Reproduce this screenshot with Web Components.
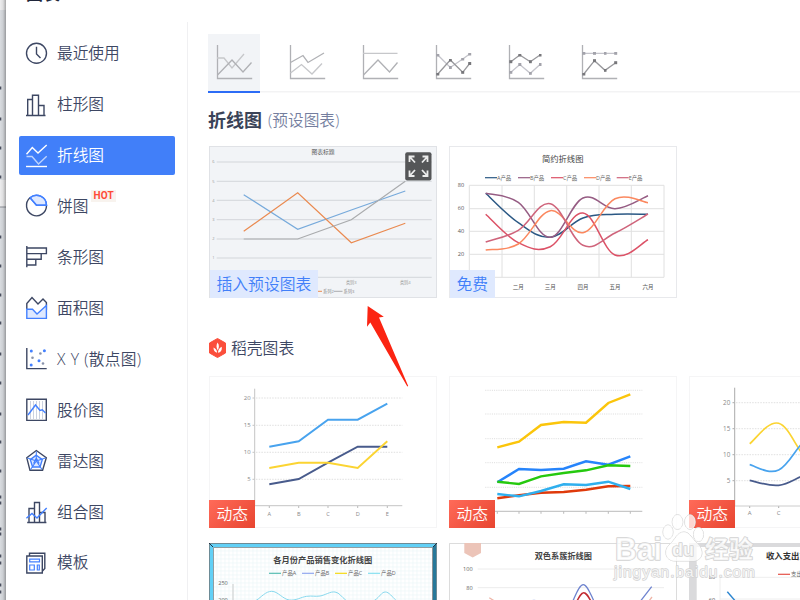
<!DOCTYPE html>
<html lang="zh-CN">
<head>
<meta charset="utf-8">
<title>图表</title>
<style>
    html, body {
        margin: 0;
        width: 800px;
        height: 600px;
        overflow: hidden;
        background: #fff;
        font-family: "Open Sans", "Noto Sans CJK SC", sans-serif;
    }
</style>
</head>
<body>

<chart-dialog>
    <side-nav slot="nav">
        <nav-item icon="clock">最近使用</nav-item>
        <nav-item icon="column">柱形图</nav-item>
        <nav-item icon="line" active>折线图</nav-item>
        <nav-item icon="pie" badge="HOT">饼图</nav-item>
        <nav-item icon="bar">条形图</nav-item>
        <nav-item icon="area">面积图</nav-item>
        <nav-item icon="scatter" class="wide">X Y (散点图)</nav-item>
        <nav-item icon="stock">股价图</nav-item>
        <nav-item icon="radar">雷达图</nav-item>
        <nav-item icon="combo">组合图</nav-item>
        <nav-item icon="template">模板</nav-item>
    </side-nav>

    <tab-strip>
        <tab-icon kind="0" active></tab-icon>
        <tab-icon kind="1"></tab-icon>
        <tab-icon kind="2"></tab-icon>
        <tab-icon kind="3"></tab-icon>
        <tab-icon kind="4"></tab-icon>
        <tab-icon kind="5"></tab-icon>
    </tab-strip>

    <chart-section>
        <preset-heading slot="heading" note="(预设图表)">折线图</preset-heading>
        <chart-card chart="preset" hovered tag="插入预设图表"></chart-card>
        <chart-card chart="simple" tag="免费"></chart-card>
    </chart-section>

    <chart-section>
        <docer-heading slot="heading">稻壳图表</docer-heading>
        <chart-card chart="abc" kind="live" tag="动态"></chart-card>
        <chart-card chart="multi" kind="live" tag="动态"></chart-card>
        <chart-card chart="curve" kind="live" tag="动态"></chart-card>
        <chart-card chart="sales" kind="bare"></chart-card>
        <chart-card chart="cluster"></chart-card>
        <chart-card chart="income" kind="bare"></chart-card>
    </chart-section>

    <red-arrow slot="overlay"></red-arrow>
    <water-mark slot="overlay"></water-mark>
</chart-dialog>

<script>
// Small helper: every component renders its markup once
function render(host, html) {
    const root = host.attachShadow({ mode: 'open' });
    const template = document.createElement("template");
    template.innerHTML = html;
    root.appendChild(template.content.cloneNode(true));
    return root;
}



// Icons of the side navigation, 22 x 24
const navIcons = {
    clock: `<circle cx="10.5" cy="11.3" r="10"/><path d="M10.5 4.8V12L14.5 16"/>`,
    column: `<path d="M0 22.5H19.5M1.7 22.5V6.5H6.5M6.5 22.5V2.2H12.5V22.5M12.5 12.5H18V22.5"/>`,
    line: `<path d="M.5 10.2L6.3 3.5L12 9L20.7 1"/><path d="M.5 12.5H6L12.5 20L20.7 12.3" opacity=".65"/><path d="M0 22.5H21"/>`,
    pie: `<path d="M10.5 11.3L4 3.7A10 10 0 0 1 20.5 11.3Z" fill="#dfe9ff" stroke="#4380ff"/><path d="M4 3.7A10 10.3 0 1 0 20.5 11.5"/><path d="M4 3.7A10 10 0 0 1 20.5 11.3H10.5L4 3.7" stroke="#4380ff"/>`,
    bar: `<path d="M.8 1V22.3M.8 3H20.4V8.6H.8M15.2 8.6V14.2H.8M9.8 14.2V20H.8"/>`,
    area: `<path d="M.8 13V7.5L6 1.5L12 8L17 3L20.4 6.5V14"/><path d="M.8 13.2H6.5L11 18L20.4 9.5V22.4H.8Z" fill="#dfe9ff" stroke="#4380ff"/>`,
    scatter: `<path d="M.8 1V21.6H20.7"/><g stroke="none" fill="#4380ff"><circle cx="5.3" cy="3.9" r="1.5"/><circle cx="18.4" cy="3.8" r="1.5"/><circle cx="13" cy="13.8" r="1.5"/><circle cx="5.2" cy="18" r="1.5"/></g><g stroke="none" fill="#8a93ab"><circle cx="14.4" cy="6.5" r="1.3"/><circle cx="6.5" cy="10.8" r="1.3"/><circle cx="17" cy="16.5" r="1.3"/></g>`,
    stock: `<path d="M4.5 3V21M7.5 3V21M10.5 3V21M13.5 3V21M16.5 3V21" stroke="#ccd2e0" stroke-width="1"/><path d="M.8 1.2H20.3V22.4H.8Z"/><path d="M2 17L9.5 7L14 12.5L16.3 11.8L19.5 15" stroke="#4380ff"/>`,
    radar: `<path d="M10.3 1.5L20.3 8.8L16.6 21.3H4L.8 8.8Z"/><path d="M10.3 6.2L16.3 10.6L14 18H6.6L4.3 10.6Z" fill="#dfe9ff" stroke="#4380ff"/><path d="M10.3 2.5V12M10.3 12L19.5 9M10.3 12L16 20.5M10.3 12L4.6 20.5M10.3 12L1.5 9M7.5 14.5L10.3 9L13.2 14.5" stroke="#4380ff" stroke-width="1.1"/>`,
    combo: `<path d="M1.2 22.5H20.4M3 22.5V8.5H8.5M8.5 22.5V2.5H13.5V22.5M13.5 12.5H19V22.5"/><path d="M.4 18.3L6 13.4L11 18L20.7 8" stroke="#4380ff"/>`,
    template: `<path d="M3.5 5V2.2H18.8V17.5L16.5 20"/><path d="M.8 5H16.3V22H.8Z"/><path d="M3.7 8.2H13.5V10.8H3.7ZM3.7 14H8.3V19H3.7ZM11.3 14H13.3V19H11.3Z" stroke="#4380ff" stroke-width="1.2"/>`
};

class NavItem extends HTMLElement {
    connectedCallback() {
        const badge = this.getAttribute("badge");
        render(this, `
        <style>
            :host {
                display: flex;
                align-items: center;
                box-sizing: border-box;
                height: 39.9px;
                padding-left: 7px;
                border-radius: 2px;
                color: #3d4763;
                font-size: 15.7px;
                font-weight: 350;
                white-space: nowrap;
            }
            :host([active]) { background: #417ff9; color: #fff; }
            :host(.wide) { word-spacing: .6px; letter-spacing: .3px; }
            svg { width: 22px; height: 24px; margin-right: 9px; overflow: visible; }
            .label { padding-bottom: 1.5px; }
            .badge {
                align-self: flex-start;
                margin: 4px 0 0 3px;
                padding: 0 2px;
                font: bold 10px/12px Roboto, sans-serif;
                letter-spacing: .3px;
                background: #f8f3ee;
                color: #ff4a37;
            }
        </style>
        <svg viewBox="0 0 22 24" fill="none" stroke="currentColor" stroke-width="1.4">${navIcons[this.getAttribute("icon")]}</svg>
        <span class="label"><slot></slot></span>
        ${badge ? `<span class="badge">${badge}</span>` : ""}`);
    }
}
customElements.define("nav-item", NavItem);

class SideNav extends HTMLElement {
    connectedCallback() {
        render(this, `
        <style>
            :host {
                display: flex;
                flex-direction: column;
                gap: 11px;
                box-sizing: border-box;
                width: 182px;
                height: 578px;
                margin-top: 22px;
                padding: 11.8px 12px 0 13px;
                border-right: 1px solid #f0f0f2;
            }
        </style>
        <slot></slot>`);
    }
}
customElements.define("side-nav", SideNav);



// Tabs
const tabIcons = [
    `<path d="M0 13H7L15 23L27 9" stroke="#c6c7ca"/><path d="M.5 30L15 15L26 27L34.5 17.5"/>`,
    `<path d="M.5 28L11.5 19.5L22 29L32 18.5" stroke="#c6c7ca"/><path d="M.5 17.5L13 10.5L18 17.5L34 8"/>`,
    `<path d="M0 8.3H34.5" stroke="#c6c7ca"/><path d="M.5 30L15 15L26.5 27L34.5 17.5"/>`,
    `<path class="dots" d="M1.8 10L14.3 22.5L26.7 14L33.7 9" stroke="#c4c4cb"/><path class="dots dark" d="M1.8 29L14.3 15L26.7 27.3L33.7 18.5" stroke="#98989c"/>`,
    `<path class="dots" d="M1.8 27.3L10.8 19.5L21.3 28.3L31 19.5" stroke="#c4c4cb"/><path class="dots dark" d="M1.8 16.7L10.8 10L21.3 16.7L31 10" stroke="#98989c"/>`,
    `<path class="dots" d="M1.8 8.3H12.5H23H33.7" stroke="#c4c4cb"/><path class="dots dark" d="M1.8 29L12.5 15.7L23 25.3L33.7 17.7" stroke="#98989c"/>`
];

class TabIcon extends HTMLElement {
    connectedCallback() {
        render(this, `
        <style>
            :host { display: block; box-sizing: border-box; width: 52px; height: 59px; padding: 11px 0 0 9px; border-bottom: 2px solid transparent; }
            :host([active]) { background: #f2f4f7; background-clip: padding-box; border-color: #2c6cf6; }
            svg { display: block; overflow: visible; }
            .dots { marker: url(#dot); }
            .dots.dark { marker: url(#dark-dot); }
        </style>
        <svg width="36" height="35" fill="none" stroke="#b0b1b5" stroke-width="1.3">
            <marker id="dot" markerUnits="userSpaceOnUse" markerWidth="4" markerHeight="4" refX="1.5" refY="1.5">
                <rect width="3" height="3" fill="#a3a3ab" stroke="none"/>
            </marker>
            <marker id="dark-dot" markerUnits="userSpaceOnUse" markerWidth="4" markerHeight="4" refX="1.5" refY="1.5">
                <rect width="3" height="3" fill="#77777b" stroke="none"/>
            </marker>
            <path d="M.5 0V33.5H35.2"/>${tabIcons[this.getAttribute("kind")]}
        </svg>`);
    }
}
customElements.define("tab-icon", TabIcon);

class TabStrip extends HTMLElement {
    connectedCallback() {
        render(this, `
        <style>
            :host {
                display: flex;
                gap: 21px;
                height: 59px;
                background: linear-gradient(#f3f3f4, #f3f3f4) 0 57px / 100% 1.5px no-repeat;
            }
        </style>
        <slot></slot>`);
    }
}
customElements.define("tab-strip", TabStrip);



// Section headings
class PresetHeading extends HTMLElement {
    connectedCallback() {
        render(this, `
        <style>
            :host { display: flex; align-items: center; gap: 6px; box-sizing: border-box; height: 54px; margin: 0 0 -1px -1px; padding-bottom: 2px; white-space: nowrap; }
            b { font-size: 18px; color: #3a4358; }
            span { font-size: 15.7px; font-weight: 350; color: #747e9e; }
        </style>
        <b><slot></slot></b><span>${this.getAttribute("note")}</span>`);
    }
}
customElements.define("preset-heading", PresetHeading);

class DocerHeading extends HTMLElement {
    connectedCallback() {
        render(this, `
        <style>
            :host { display: flex; align-items: center; gap: 5px; height: 56px; margin-top: 22px; color: #3d4763; font-size: 15.8px; font-weight: 350; }
            span { padding-bottom: 1px; }
        </style>
        <svg width="17" height="20" viewBox="0 0 17 20">
            <path d="M8.5 .5L16.5 5V15L8.5 19.5L.5 15V5Z" fill="#fb4f3c" stroke="#fb4f3c" stroke-linejoin="round"/>
            <path d="M8.6 4.5C10.6 7 10 10 8.8 12.2C7.3 10 7 7 8.6 4.5ZM4.5 9.5C6.8 10.5 8 12.3 8.1 14.8C5.6 14.2 4.5 12.3 4.5 9.5ZM12.8 8.7C13.2 12.3 11.7 14.5 9 14.8C9 12.2 10.3 9.8 12.8 8.7Z" fill="#fff"/>
        </svg>
        <span><slot></slot></span>`);
    }
}
customElements.define("docer-heading", DocerHeading);



// Charts
function line(xs, ys, color, width = 1.5) {
    const points = xs.map((x, i) => x + "," + ys[i]).join(" ");
    return `<polyline points="${points}" fill="none" stroke="${color}" stroke-width="${width}"/>`;
}

function curve(xs, ys, color, width = 1.5) {
    let d = `M${xs[0]} ${ys[0]}`;
    for (let i = 0; i < xs.length - 1; i++) {
        const a = Math.max(i - 1, 0);
        const b = Math.min(i + 2, xs.length - 1);
        const k = 5.4;
        d += `C${xs[i] + (xs[i + 1] - xs[a]) / k} ${ys[i] + (ys[i + 1] - ys[a]) / k} `
           + `${xs[i + 1] - (xs[b] - xs[i]) / k} ${ys[i + 1] - (ys[b] - ys[i]) / k} ${xs[i + 1]} ${ys[i + 1]}`;
    }
    return `<path d="${d}" fill="none" stroke="${color}" stroke-width="${width}"/>`;
}

function rows(ys, x1, x2, color, dash = "none", width = 1) {
    return ys.map(y => `<path d="M${x1} ${y}H${x2}" stroke="${color}" stroke-dasharray="${dash}" stroke-width="${width}"/>`).join("");
}

function text(x, y, str, size, color = "#777", anchor = "middle", weight = 400) {
    return `<text x="${x}" y="${y + size * .36}" font-size="${size}" fill="${color}" text-anchor="${anchor}" font-weight="${weight}">${str}</text>`;
}

function legend(items, y, length, gap = 0) {
    return items.map(([x, color, name]) =>
        `<path d="M${x} ${y}h${length}" stroke="${color}" stroke-width="1.2"/>` + text(x + length + gap, y, name, 5.4, "#666", "start")).join("");
}

const charts = {
    preset() {
        const xs = [34.7, 88.7, 142.3, 196.3];
        return rows([16, 35.3, 54.3, 73.7, 93, 112, 131.3], 7.7, 222.7, "#d3d6da")
            + text(114, 6, "图表标题", 5.8, "#555")
            + [6, 5, 4, 3, 2, 1].map((n, i) => text(4.5, 16 + i * 19.2, n, 4, "#999")).join("")
            + line(xs, [48.7, 83.3, 64, 45], "#77aadb", 1.2)
            + line(xs, [85.3, 46.7, 96.7, 77.3], "#ea8a50", 1.2)
            + line(xs, [93, 93, 73.7, 35.3], "#a9abad", 1.2)
            + text(142.3, 136.5, "类别3", 4.2, "#999") + text(196.3, 136.5, "类别4", 4.2, "#999")
            + `<path d="M109 145.3h4" stroke="#ea8a50"/><path d="M125 145.3h8.5" stroke="#a9abad"/>`
            + text(114, 145.3, "系列2", 4.2, "#888", "start") + text(134.5, 145.3, "系列3", 4.2, "#888", "start");
    },
    simple() {
        const xs = [36.7, 69.3, 101.3, 134, 166, 199];
        const months = ["二月", "三月", "四月", "五月", "六月"];
        return rows([39.3, 62.7, 85.3, 108.3, 131.3], 20.3, 215, "#e0e0e0")
            + [20.3, 53, 85.3, 117.7, 150, 182.3, 215].map(x => `<path d="M${x} 39.3V131.3" stroke="#e0e0e0"/>`).join("")
            + text(113.7, 13.2, "简约折线图", 8.3, "#444")
            + legend([[36, "#2b5884", "A产品"], [69, "#965c83", "B产品"], [102, "#dc5267", "C产品"], [135, "#fb885f", "D产品"], [167.7, "#cf647b", "E产品"]], 31.7, 12)
            + [80, 60, 40, 20].map((n, i) => text(12, 39.3 + i * 23, n, 5.6, "#555")).join("")
            + months.map((m, i) => text(xs[i + 1], 141.3, m, 5.5, "#555")).join("")
            + curve(xs, [47.3, 76.7, 91.3, 72, 68.3, 68.3], "#2b5884")
            + curve(xs, [47.3, 56.3, 91.3, 52, 62.7, 49.7], "#965c83")
            + curve(xs, [68.3, 96.7, 100.7, 67, 109, 93.7], "#dc5267")
            + curve(xs, [104, 98, 64.7, 86.7, 52.7, 56.7], "#fb885f")
            + curve(xs, [96, 84.3, 57.7, 99.3, 87, 68], "#cf647b");
    },
    abc() {
        const xs = [60.3, 89.7, 119, 148.7, 178.3];
        return rows([22, 49.3, 76.3, 103.3], 47, 193.3, "#d8d8d8", "1.5 1.2", .8)
            + `<path d="M45.7 12.7V129.7H193.3M43.5 22h2M43.5 49.3h2M43.5 76.3h2M43.5 103.3h2" stroke="#c4c4c4" fill="none"/>`
            + [20, 15, 10, 5].map((n, i) => text(41.7, 22 + i * 27.1, n, 6, "#888", "end")).join("")
            + ["A", "B", "C", "D", "E"].map((s, i) => text(xs[i], 137.7, s, 5.6, "#888") + `<path d="M${xs[i]} 130v2" stroke="#bbb"/>`).join("")
            + line(xs, [70.7, 65.3, 43.7, 43.7, 27.7], "#48a3ee", 1.9)
            + line(xs, [108.3, 103, 86.7, 70.7, 70.7], "#485b8c", 1.9)
            + line(xs, [92, 86.7, 86.7, 92, 65.3], "#fbd432", 1.9);
    },
    multi() {
        const xs = [48.3, 70, 92, 114.7, 137, 159.3, 181.3];
        return rows([14.3, 38, 62.7, 86.7, 111.3], 36.3, 193.3, "#d2d2d2", "1 1.2", .8)
            + rows([135.3], 36.3, 193.3, "#bbb")
            + xs.map(x => `<path d="M${x} 135.3v2.5" stroke="#bbb"/>`).join("")
            + line(xs, [71.3, 65.7, 49, 46, 46.7, 27, 18.3], "#fbc50b", 2.4)
            + line(xs, [106.3, 93, 94, 92.7, 85.3, 88.7, 80.3], "#2684fb", 2.4)
            + line(xs, [105.7, 108, 100.3, 97, 94.3, 89.3, 90], "#25c90e", 2.4)
            + line(xs, [122.3, 119.3, 116.7, 116, 113.7, 110.3, 110], "#df3a0b", 2.4)
            + line(xs, [118, 120.3, 115, 108.3, 109, 105.7, 113], "#2fafee", 2.4);
    },
    curve() {
        const xs = [60.7, 89.7, 119, 148];
        return rows([26.7, 52.7, 78.7, 104.7], 47, 193, "#d8d8d8", "1.5 1.2", .8)
            + `<path d="M45.7 11.7V130M43.5 26.7h2M43.5 52.7h2M43.5 78.7h2M43.5 104.7h2M60.7 130v2M89.7 130v2" stroke="#aaa" fill="none"/>`
            + rows([130], 45.7, 193, "#ccc")
            + [20, 15, 10, 5].map((n, i) => text(41.3, 26.7 + i * 26, n, 6.3, "#888", "end")).join("")
            + text(60.7, 137.3, "A", 6, "#888") + text(89.7, 137.3, "C", 6, "#888")
            + curve(xs, [67.7, 47.3, 84, 92], "#fbd432", 1.7)
            + curve(xs, [88.7, 94, 62, 58], "#48a3ee", 1.7)
            + curve(xs, [104.3, 109.3, 98, 94], "#485b8c", 1.7);
    },
    sales() {
        let mesh = "";
        for (let i = 8; i < 224; i += 4) mesh += `M${i} 5V152`;
        for (let i = 8; i < 152; i += 4) mesh += `M5 ${i}H223`;
        return `<path d="M0 0H228V152H0Z" fill="#6d8b96"/><path d="M1 1H227L223 5H5V152H1Z" fill="#62d0f6"/>
            <path d="M227 1V152H223V5Z" fill="#28799a"/><path d="M4.5 4.5H223.5V153H4.5Z" fill="#fff" stroke="#8a8a8a" stroke-width=".8"/>
            <path d="${mesh}" stroke="#edf6f8" stroke-width=".7"/><path d="M0 0l4 4M228 0l-4 4" stroke="#234"/>`
            + text(113.7, 17.3, "各月份产品销售变化折线图", 8.25, "#444", "middle", 700)
            + legend([[60, "#55bdb1", "产品A"], [93, "#8fa6ef", "产品B"], [126, "#f4d811", "产品C"], [159, "#84dff0", "产品D"]], 30.3, 12, 1)
            + text(14, 40.3, 250, 5.6, "#666") + text(14, 57, 200, 5.6, "#666")
            + `<path d="M24 41V152" stroke="#ccc"/>`
            + curve([40, 47.7, 62.7, 80.3, 97.7, 111, 126, 136.7, 150, 166, 176.3, 186.7, 196], [62, 57, 48.3, 57, 53.3, 53, 49, 57, 66, 57, 49, 57, 66], "#87d9ee", 1);
    },
    cluster() {
        return `<path d="M.5 152V.5H227.5V152" fill="none" stroke="#dcdcdc"/><path d="M15.3 0H32V10L23.7 14.5L15.3 10Z" fill="#ecc4b8"/>`
            + rows([26, 44.7], 28.7, 215, "#ececec")
            + text(114.3, 12.8, "双色系簇折线图", 8.2, "#444", "middle", 700)
            + text(23.7, 26, 100, 5.6, "#666", "end") + text(23.7, 44.7, 80, 5.6, "#666", "end")
            + `<path d="M122 62C126 54 130 41.7 134.3 41.7S142 53 147 62M190 60L202.7 43.7" fill="none" stroke="#6f84cf" stroke-width="1.3"/>
               <path d="M127 60C130 54 132 49.7 134.7 49.7S139 53 143 60" fill="none" stroke="#c22b32" stroke-width="1.5"/>
               <path d="M81 60Q85 54 89 60" fill="none" stroke="#c5cdee" stroke-width="1.2"/>
               <path d="M40.3 54.7L47 59M200 58l3-4" stroke="#efb5a7" stroke-width="1.3"/>`;
    },
    income() {
        return `<path d="M0 0H228V152H0Z" fill="#dadadc"/><path d="M7.7 4H220V152H7.7Z" fill="#fff"/>
            <path d="M31 34.3H215M31 56H215M31 34V152" stroke="#eee"/>`
            + text(77, 12.5, "收入支出变化折线图", 8.4, "#333", "start", 700)
            + legend([[89, "#e55248", "支出"]], 31.3, 12, 1)
            + text(23, 34.3, 80, 5.6, "#555") + text(23, 56.5, 60, 5.6, "#555")
            + `<path d="M38.3 48.7L48 60" stroke="#2b85d0" stroke-width="1.4"/>`;
    }
};

class ChartCard extends HTMLElement {
    connectedCallback() {
        const tag = this.getAttribute("tag");
        render(this, `
        <style>
            :host { display: block; position: relative; width: 228px; height: 152px; background: #fff; box-shadow: inset 0 0 0 1px #e8e9ec; }
            :host([kind=live]) { box-shadow: inset 0 0 0 1px #f5f5f6; }
            :host([hovered]) { background: #f2f4f7; box-shadow: inset 0 0 0 1px #e0e2e6; }
            svg.chart { display: block; }
            .tag {
                position: absolute;
                left: 1px;
                bottom: 0;
                height: 28px;
                padding: 0 7px 0 6.5px;
                font-size: 15.8px;
                line-height: 28px;
                font-weight: 350;
                white-space: nowrap;
                background: #dfe9fe;
                color: #417ff9;
            }
            :host([kind=live]) .tag { left: 0; padding: 0 7px 0 7.5px; background: linear-gradient(135deg, #ff6a59, #e84530); color: #fff; }
            .expand { position: absolute; left: 195.5px; top: 5.5px; display: none; }
            :host([hovered]) .expand { display: block; }
        </style>
        <svg class="chart" width="228" height="152" viewBox="0 0 228 152">${charts[this.getAttribute("chart")]()}</svg>
        ${tag ? `<span class="tag">${tag}</span>` : ""}
        <svg class="expand" width="27" height="29" viewBox="0 0 27 29">
            <rect x=".2" y=".2" width="26.3" height="28.3" rx="2" fill="#555658"/>
            <path d="M9.5 4.5H4.5V10M4.5 4.5L10 10.5M17.5 4.5H22.5V10M22.5 4.5L17 10.5M4.5 18.5V24H9.5M4.5 24L10 18M22.5 18.5V24H17.5M22.5 24L17 18" fill="none" stroke="#ececec" stroke-width="1.8"/>
        </svg>`);
    }
}
customElements.define("chart-card", ChartCard);

class ChartSection extends HTMLElement {
    connectedCallback() {
        render(this, `
        <style>
            :host { display: block; padding-left: 1px; }
            .grid { display: grid; grid-template-columns: repeat(3, 228px); gap: 14.5px 12px; }
        </style>
        <slot name="heading"></slot>
        <div class="grid"><slot></slot></div>`);
    }
}
customElements.define("chart-section", ChartSection);



// Things lying over the dialog
class RedArrow extends HTMLElement {
    connectedCallback() {
        render(this, `
        <style>
            :host { position: absolute; left: 366px; top: 305px; }
            svg { display: block; }
        </style>
        <svg width="43" height="83"><path d="M1.7 1L17.8 11.8L13 12.6L42.2 81L41.3 81.5L4.3 17.6L1 21.8Z" fill="#fb2412"/></svg>`);
    }
}
customElements.define("red-arrow", RedArrow);

class WaterMark extends HTMLElement {
    connectedCallback() {
        render(this, `
        <style>
            :host { position: absolute; left: 608px; top: 510px; }
            svg { display: block; font-family: "Liberation Sans", "Noto Sans CJK SC", sans-serif; }
        </style>
        <svg width="160" height="76" fill="#fff" fill-opacity=".75" stroke="#d2d2d2" stroke-width="1.6" stroke-linejoin="round" paint-order="stroke">
            <text x="7" y="50" font-size="31" font-weight="bold" textLength="47" lengthAdjust="spacingAndGlyphs">Bai</text>
            <g stroke-width="1">
                <ellipse cx="60" cy="22" rx="5" ry="7"/><ellipse cx="69.5" cy="12" rx="5.3" ry="7.3"/>
                <ellipse cx="82" cy="12" rx="5.3" ry="7.3"/><ellipse cx="90.5" cy="24.5" rx="5" ry="7"/>
                <path d="M76 22C82 22 84 29 89 33C96 39 96 50 86 51C79 51 73 51 67 51C57 51 55 40 62 34C67 30 69 22 76 22Z"/>
            </g>
            <text x="64" y="46" font-size="18" font-weight="bold" textLength="22" lengthAdjust="spacingAndGlyphs">du</text>
            <text x="97" y="48" font-size="24" font-weight="bold" textLength="48" lengthAdjust="spacingAndGlyphs">经验</text>
            <text x="6" y="67" font-size="15.5" stroke-width="1.3" textLength="141">jingyan.baidu.com</text>
        </svg>`);
    }
}
customElements.define("water-mark", WaterMark);



// Dialog frame, with the edge of the sheet window visible behind it
const edgeMarks = [88, 119, 148, 177, 237, 266, 295, 323, 354, 383, 414, 442, 471, 497, 503, 529, 534, 556, 563, 585, 592];

class ChartDialog extends HTMLElement {
    connectedCallback() {
        render(this, `
        <style>
            :host { display: grid; grid-template-columns: 6px 182px 1fr; position: relative; width: 800px; height: 600px; overflow: hidden; }
            .edge { height: 600px; }
            .title {
                position: absolute;
                left: 26px;
                top: -16px;
                font-size: 17px;
                line-height: 20px;
                font-weight: bold;
                color: #20263a;
            }
            main { box-sizing: border-box; height: 600px; padding: 34px 0 0 20px; overflow: hidden; }
        </style>
        <svg class="edge" width="6" height="600">
            <linearGradient id="shade"><stop stop-color="#000" stop-opacity="0"/><stop offset=".5" stop-color="#000" stop-opacity=".06"/><stop offset="1" stop-color="#000" stop-opacity=".3"/></linearGradient>
            <path d="M0 0H6V600H0Z" fill="#d9dce0"/>
            <path d="M0 0H6V10H0ZM0 180H6V207H0Z" fill="#ededee"/>
            <path d="M0 207H6" stroke="#8b8e96"/>
            ${edgeMarks.map(y => `<path d="M0 ${y}h1.3" stroke="#4a4f5f" stroke-width="3"/>`).join("")}
            <path d="M0 0H6V600H0Z" fill="url(#shade)"/>
        </svg>
        <slot name="nav"></slot>
        <main><slot></slot></main>
        <div class="title">图表</div>
        <slot name="overlay"></slot>`);
    }
}
customElements.define("chart-dialog", ChartDialog);
</script>
</body>
</html>
